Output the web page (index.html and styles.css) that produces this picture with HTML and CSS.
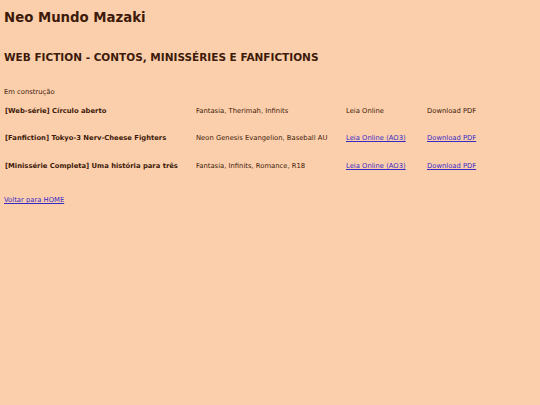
FILE: index.html
```html
<!DOCTYPE html>
<html lang="pt">
<head>
<meta charset="utf-8">
<title>Neo Mundo Mazaki</title>
<link rel="stylesheet" href="styles.css">
</head>
<body>
<h1 class="site-title">Neo Mundo Mazaki</h1>
<h2 class="section-title">WEB FICTION - CONTOS, MINISSÉRIES E FANFICTIONS</h2>
<p class="note">Em construção</p>
<table class="works">
  <tr>
    <td class="name">[Web-série] Círculo aberto</td>
    <td class="tags">Fantasia, Therimah, Infinits</td>
    <td class="read">Leia Online</td>
    <td class="pdf">Download PDF</td>
  </tr>
  <tr>
    <td class="name">[Fanfiction] Tokyo-3 Nerv-Cheese Fighters</td>
    <td class="tags">Neon Genesis Evangelion, Baseball AU</td>
    <td class="read"><a href="#">Leia Online (AO3)</a></td>
    <td class="pdf"><a href="#">Download PDF</a></td>
  </tr>
  <tr>
    <td class="name">[Minissérie Completa] Uma história para três</td>
    <td class="tags">Fantasia, Infinits, Romance, R18</td>
    <td class="read"><a href="#">Leia Online (AO3)</a></td>
    <td class="pdf"><a href="#">Download PDF</a></td>
  </tr>
</table>
<p class="back"><a href="#">Voltar para HOME</a></p>
</body>
</html>
```
FILE: styles.css
```css
html, body {
  background: #fccfac;
}
body {
  margin: 0;
  padding: 0 4px;
  font-family: "DejaVu Sans", Verdana, sans-serif;
  color: #3d1a0a;
  font-size: 6.8px;
}
.site-title {
  margin: 0;
  padding-top: 10px;
  font-size: 13.3px;
  line-height: 16px;
  font-weight: bold;
}
.section-title {
  margin: 24px 0 0;
  font-size: 10.5px;
  line-height: 14px;
  font-weight: bold;
}
.note {
  margin: 24px 0 0;
  line-height: 9px;
}
.works {
  border-collapse: collapse;
  margin-top: 10px;
}
.works td {
  padding: 10px 1px 0;
  height: 27.5px;
  vertical-align: top;
  box-sizing: border-box;
  line-height: 9px;
  white-space: nowrap;
}
.works tr:first-child td {
  height: 17px;
  padding-top: 0;
}
.name {
  font-weight: bold;
  width: 191px;
}
.tags { width: 150px; }
.read { width: 81px; }
a {
  color: #3a2ac4;
}
.back {
  margin: 17px 0 0;
  line-height: 9px;
}
```
